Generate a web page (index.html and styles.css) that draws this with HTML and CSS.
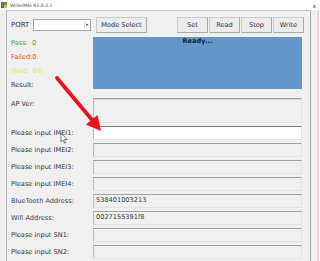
FILE: index.html
```html
<!DOCTYPE html>
<html lang="en">
<head>
  <meta charset="UTF-8">
  <title>WriteIMEI R1.0.3.1</title>
  <link rel="stylesheet" href="styles.css">
</head>
<body>
  <div class="titlebar">
    <span class="app-icon"><i class="q1"></i><i class="q2"></i><i class="q3"></i><i class="q4"></i></span>
    <span class="title">WriteIMEI R1.0.3.1</span>
    <span class="close">x</span>
  </div>

  <div class="frame">
    <div class="toprow">
      <span class="port">PORT</span>
      <div class="combo"><span class="drop"></span></div>
      <button class="btn mode">Mode Select</button>
      <div class="actions">
        <button class="btn">Set</button>
        <button class="btn">Read</button>
        <button class="btn">Stop</button>
        <button class="btn">Write</button>
      </div>
    </div>

    <div class="form">
      <div class="stats">
        <div class="pass">Pass:&nbsp; 0</div>
        <div class="failed">Failed:0</div>
        <div class="yield">Yiled:&nbsp; 0%</div>
        <div>Result:</div>
      </div>
      <div class="status">Ready...</div>

      <div class="label ap">AP Ver:</div>
      <div class="field tall"></div>

      <div class="label">Please input IMEI1:</div>
      <div class="field active"></div>

      <div class="label">Please input IMEI2:</div>
      <div class="field"></div>

      <div class="label">Please input IMEI3:</div>
      <div class="field"></div>

      <div class="label">Please input IMEI4:</div>
      <div class="field"></div>

      <div class="label blue">BlueTooth Address:</div>
      <div class="field">538401003213</div>

      <div class="label blue">Wifi Address:</div>
      <div class="field">0027155391f8</div>

      <div class="label">Please input SN1:</div>
      <div class="field"></div>

      <div class="label">Please input SN2:</div>
      <div class="field"></div>
    </div>
  </div>

  <!-- annotation drawn over the window -->
  <svg class="overlay" width="320" height="261" viewBox="0 0 320 261">
    <line x1="57" y1="78" x2="93" y2="121" stroke="#e8141b" stroke-width="3.8" stroke-linecap="round"/>
    <polygon points="101,131 86,124.5 97.5,115" fill="#e8141b"/>
    <path d="M61 133 v9 l2 -2 l1.6 3.2 l1.2 -0.6 l-1.6 -3.1 h2.9 z" fill="#fff" stroke="#333" stroke-width="0.6"/>
  </svg>
</body>
</html>
```

FILE: styles.css
```css
body {
  margin: 0;
  width: 320px;
  height: 261px;
  overflow: hidden;
  position: relative;
  background: linear-gradient(to right, #f0f0f0 317px, #efd2dc 317px, #efd2dc 319px, #f7f7f7 319px);
  font-family: "DejaVu Sans", sans-serif;
  font-size: 6.6px;
  color: #333333;
}

.titlebar {
  height: 10px;
  background-color: #ffffff;
  display: flex;
  align-items: center;
}

.app-icon {
  display: grid;
  grid-template-columns: 3px 3px;
  grid-template-rows: 3px 3px;
  margin-left: 1px;
}

.app-icon .q1 { background-color: #e83a2c; }
.app-icon .q2 { background-color: #3aa53a; }
.app-icon .q3 { background-color: #2f6fd6; }
.app-icon .q4 { background-color: #f2c21b; }

.title {
  margin-left: 3px;
  font-size: 4.6px;
  color: #444444;
}

.close {
  margin-left: auto;
  margin-right: 4px;
  font-size: 6px;
  color: #333333;
}

.frame {
  margin-left: 6px;
  width: 305px;
  height: 251px;
  box-sizing: border-box;
  border-top: 1px solid #c4c4c4;
  border-left: 1px solid #b4b4b4;
  border-right: 1px solid #a8a8a8;
}

.toprow {
  display: flex;
  align-items: center;
  height: 16px;
  padding-top: 6px;
}

.port {
  width: 22px;
  padding-left: 4px;
  font-size: 7px;
}

.combo {
  width: 58px;
  height: 12px;
  box-sizing: border-box;
  background-color: #ffffff;
  border: 1px solid #a6a6a6;
  display: flex;
  justify-content: flex-end;
  align-items: center;
}

.drop {
  width: 4px;
  height: 8px;
  margin-right: 1px;
  background-color: #f4f4f4;
  border-left: 1px solid #e0e0e0;
  position: relative;
}

.drop::after {
  content: "";
  position: absolute;
  left: 1px;
  top: 3px;
  border-left: 1px solid transparent;
  border-right: 1px solid transparent;
  border-top: 2px solid #333333;
}

.btn {
  height: 16px;
  padding: 0;
  box-sizing: border-box;
  background-color: #ececec;
  border: 1px solid #cccccc;
  border-right-color: #a9a9a9;
  border-bottom-color: #a9a9a9;
  font-family: "DejaVu Sans", sans-serif;
  font-size: 6.6px;
  color: #333333;
}

.mode {
  width: 51px;
  margin-left: 5px;
}

.actions {
  display: flex;
  gap: 1px;
  margin-left: auto;
  margin-right: 6px;
}

.actions .btn {
  width: 31px;
}

.form {
  display: grid;
  grid-template-columns: 86px 209px;
  row-gap: 3px;
  margin-top: 4px;
}

.stats {
  padding-left: 4px;
  line-height: 14px;
  margin-top: -1px;
}

.pass { color: #3f9e3f; }
.failed { color: #f0393f; }
.yield { color: #e6e63a; }

.status {
  height: 52px;
  background-color: #6497c9;
  text-align: center;
  font-weight: bold;
  color: #13203a;
  line-height: 9px;
}

.label {
  padding-left: 4px;
  line-height: 14px;
  white-space: nowrap;
}

.label.blue {
  color: #2e4763;
}

.label.ap {
  margin-top: 3px;
  line-height: 12px;
}

.field {
  height: 14px;
  box-sizing: border-box;
  background-color: #f0f0f0;
  border: 1px solid #e2e2e2;
  border-top-color: #a0a0a0;
  border-left-color: #bcbcbc;
  padding-left: 2px;
  line-height: 10px;
  color: #333333;
}

.field.tall {
  height: 25px;
  margin-top: 3px;
  box-shadow: inset 0 1px 0 #d6d6d6;
}

.field.active {
  background-color: #ffffff;
  border-top-color: #7a7a7a;
}

.overlay {
  position: absolute;
  top: 0;
  left: 0;
  pointer-events: none;
}
```
